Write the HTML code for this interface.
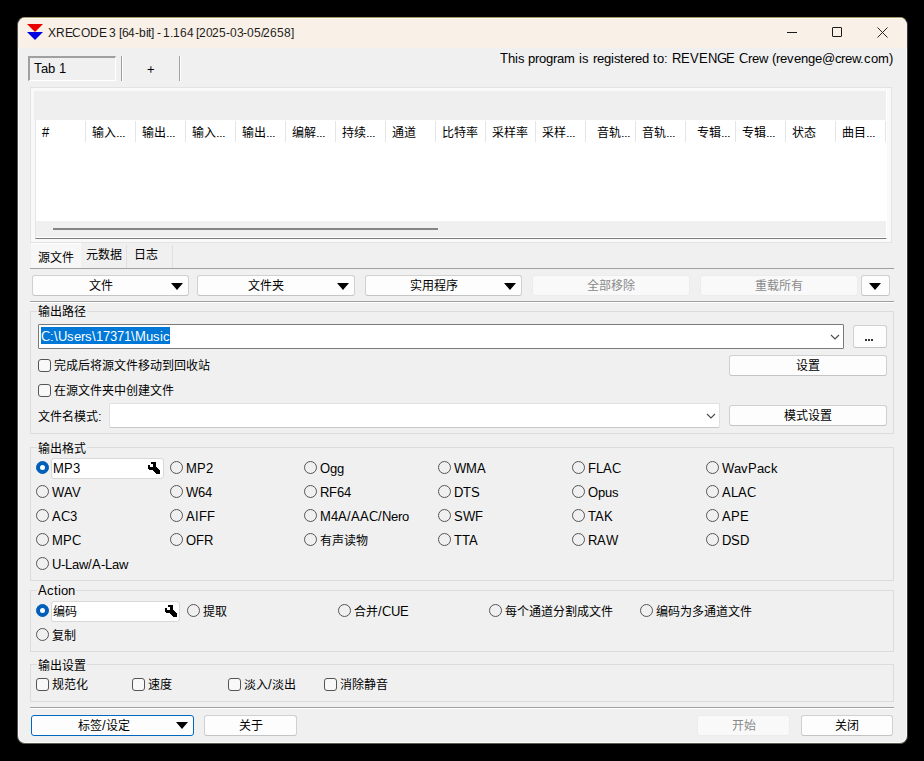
<!DOCTYPE html>
<html lang="zh-CN">
<head>
<meta charset="utf-8">
<style>
@font-face{font-family:"Liberation Sans";src:local("Liberation Sans");unicode-range:U+0000-02FF,U+2000-206F;size-adjust:108%}
*{box-sizing:border-box;margin:0;padding:0}
html,body{width:924px;height:761px;overflow:hidden;background:#000}
body{position:relative;font-family:"Liberation Sans",sans-serif;font-size:12px;color:#000}
.a{position:absolute}
.t{position:absolute;white-space:nowrap;line-height:16px;height:16px}
#win{position:absolute;left:17px;top:17px;width:891px;height:727px;border-radius:8px;background:#f0f0f0;border:1px solid #555;border-top-color:#a89a68;border-bottom-color:#5e5c50;border-right-color:#3a3a3a;overflow:hidden;box-shadow:inset 0 0 0 1px rgba(255,255,255,.75)}
#title{position:absolute;left:0;top:0;width:100%;height:30px;background:#f9f1e7;border-top:1px solid #fffaf2}
.vsep{position:absolute;width:2px;border-left:1px solid #a0a0a0;border-right:1px solid #fff}
.hsep{position:absolute;height:2px;border-top:1px solid #a0a0a0;border-bottom:1px solid #fff}
.btn{position:absolute;background:#fdfdfd;border:1px solid #d0d0d0;border-bottom-color:#c4c4c4;border-radius:3px;text-align:center;line-height:19px}
.btn.dis{background:#f9f9f9;border-color:#ececec;color:#8a8a8a;line-height:20px}
.tri{position:absolute;width:0;height:0;border-left:6px solid transparent;border-right:6px solid transparent;border-top:7px solid #000}
.grp{position:absolute;border:1px solid #dcdcdc;border-radius:0}
.glab{position:absolute;background:#f0f0f0;padding:0 1px;line-height:14px}
.cb{position:absolute;width:13px;height:13px;border:1px solid #555;border-radius:3px;background:#f8f8f8}
.rb{position:absolute;width:13px;height:13px;border:1px solid #555;border-radius:50%;background:transparent}
.rb.on{background:#005fb8;border-color:#005fb8}
.rb.on::after{content:"";position:absolute;left:3px;top:3px;width:5px;height:5px;border-radius:50%;background:#fff}
.col{position:absolute;top:121px;height:21px;width:1px;background:#e5e5e5}
.el{letter-spacing:-0.9px}
.hd{position:absolute;top:125px;line-height:16px;white-space:nowrap}
</style>
</head>
<body>
<div id="win">
  <div id="title"></div>
</div>

<!-- title bar icon -->
<svg class="a" style="left:27px;top:24px" width="16" height="16" viewBox="0 0 16 16">
  <polygon points="0,0 16,0 8,8" fill="#e80000"/>
  <polygon points="0,8 16,8 8,16" fill="#0000e0"/>
</svg>
<div class="t" style="left:48px;top:25px;color:#1a1a1a;font-size:11.112px;letter-spacing:-0.22px">XRECODE 3 [64-bit] - 1.164 [2025-03-05/2658]</div>
<!-- window controls -->
<div class="a" style="left:787px;top:32px;width:10px;height:1px;background:#1a1a1a"></div>
<div class="a" style="left:832px;top:27px;width:10px;height:10px;border:1px solid #1a1a1a;border-radius:1px"></div>
<svg class="a" style="left:877px;top:27px" width="11" height="11" viewBox="0 0 11 11"><path d="M0.5,0.5 L10.5,10.5 M10.5,0.5 L0.5,10.5" stroke="#1a1a1a" stroke-width="0.95"/></svg>

<div class="t" style="right:31px;top:51px;color:#000;letter-spacing:-0.06px">This program is registered to: REVENGE Crew (revenge@crew.com)</div>

<!-- tab strip -->
<div class="a" style="left:28px;top:56px;width:88px;height:25px;border-top:2px solid #a0a0a0;border-left:2px solid #a0a0a0;border-bottom:1px solid #fff;border-right:1px solid #fff"></div>
<div class="t" style="left:34px;top:61px">Tab 1</div>
<div class="vsep" style="left:121px;top:56px;height:25px"></div>
<div class="t" style="left:147px;top:62px">+</div>
<div class="vsep" style="left:179px;top:56px;height:25px"></div>

<!-- list -->
<div class="a" style="left:30px;top:87px;width:862px;height:156px;border:1px solid #e3e3e3;background:#f9f9f9"></div>
<div class="a" style="left:35px;top:91px;width:852px;height:148px;background:#fff;border-left:1px solid #e6e6e6;border-bottom:1px solid #7a7a7a;border-right:1px solid #fff"></div>
<div class="a" style="left:34px;top:91px;width:852px;height:29px;background:#efefef"></div>
<div class="a" style="left:36px;top:221px;width:850px;height:16px;background:#f0f0f0"></div>
<div class="a" style="left:53px;top:228px;width:385px;height:2px;background:#858585"></div>
<div class="col" style="left:85px"></div>
<div class="col" style="left:135px"></div>
<div class="col" style="left:185px"></div>
<div class="col" style="left:235px"></div>
<div class="col" style="left:285px"></div>
<div class="col" style="left:335px"></div>
<div class="col" style="left:385px"></div>
<div class="col" style="left:435px"></div>
<div class="col" style="left:485px"></div>
<div class="col" style="left:535px"></div>
<div class="col" style="left:585px"></div>
<div class="col" style="left:635px"></div>
<div class="col" style="left:685px"></div>
<div class="col" style="left:735px"></div>
<div class="col" style="left:785px"></div>
<div class="col" style="left:835px"></div>
<div class="col" style="left:885px"></div>
<div class="hd" style="left:42px">#</div>
<div class="hd" style="left:92px">输入<span class="el">...</span></div>
<div class="hd" style="left:142px">输出<span class="el">...</span></div>
<div class="hd" style="left:192px">输入<span class="el">...</span></div>
<div class="hd" style="left:242px">输出<span class="el">...</span></div>
<div class="hd" style="left:292px">编解<span class="el">...</span></div>
<div class="hd" style="left:342px">持续<span class="el">...</span></div>
<div class="hd" style="left:392px">通道</div>
<div class="hd" style="left:442px">比特率</div>
<div class="hd" style="left:492px">采样率</div>
<div class="hd" style="left:542px">采样<span class="el">...</span></div>
<div class="hd" style="left:597px">音轨<span class="el">...</span></div>
<div class="hd" style="left:642px">音轨<span class="el">...</span></div>
<div class="hd" style="left:697px">专辑<span class="el">...</span></div>
<div class="hd" style="left:742px">专辑<span class="el">...</span></div>
<div class="hd" style="left:792px">状态</div>
<div class="hd" style="left:842px">曲目<span class="el">...</span></div>

<!-- lower tabs -->
<div class="a" style="left:31px;top:243px;width:50px;height:26px;background:#f7f7f7;border-top:1px solid #fff"></div>
<div class="a" style="left:81px;top:245px;width:46px;height:23px;background:#f0f0f0;border-right:1px solid #e0e0e0"></div>
<div class="a" style="left:128px;top:245px;width:45px;height:23px;background:#f0f0f0;border-right:1px solid #e0e0e0"></div>
<div class="t" style="left:38px;top:250px">源文件</div>
<div class="t" style="left:86px;top:247px">元数据</div>
<div class="t" style="left:134px;top:247px">日志</div>
<div class="a" style="left:30px;top:268px;width:864px;height:1px;background:#a0a0a0"></div>

<!-- button row -->
<div class="btn" style="left:32px;top:275px;width:157px;height:21px;padding-right:20px">文件</div>
<div class="tri" style="left:171px;top:283px"></div>
<div class="btn" style="left:197px;top:275px;width:158px;height:21px;padding-right:20px">文件夹</div>
<div class="tri" style="left:337px;top:283px"></div>
<div class="btn" style="left:365px;top:275px;width:157px;height:21px;padding-right:20px">实用程序</div>
<div class="tri" style="left:504px;top:283px"></div>
<div class="btn dis" style="left:532px;top:275px;width:158px;height:21px">全部移除</div>
<div class="btn dis" style="left:700px;top:275px;width:158px;height:21px">重载所有</div>
<div class="btn" style="left:861px;top:275px;width:29px;height:21px"></div>
<div class="tri" style="left:869px;top:283px"></div>

<div class="hsep" style="left:30px;top:301px;width:864px"></div>

<!-- output path group -->
<div class="grp" style="left:30px;top:311px;width:864px;height:123px"></div>
<div class="glab" style="left:37px;top:305px">输出路径</div>
<div class="a" style="left:38px;top:324px;width:806px;height:25px;background:#fff;border:1px solid #7a7a7a;border-radius:1px"></div>
<div class="a" style="left:41px;top:327px;width:129px;height:17px;background:#0078d7"></div>
<div class="t" style="left:41px;top:328px;color:#fff;line-height:17px">C:\Users\17371\Music</div>
<svg class="a" style="left:830px;top:334px" width="10" height="6" viewBox="0 0 10 6"><path d="M1,1 L5,5 L9,1" fill="none" stroke="#4a4a4a" stroke-width="1.1"/></svg>
<div class="btn" style="left:853px;top:325px;width:34px;height:23px"></div><div class="a" style="left:865px;top:339px;width:2px;height:2px;background:#333"></div><div class="a" style="left:868px;top:339px;width:2px;height:2px;background:#333"></div><div class="a" style="left:871px;top:339px;width:2px;height:2px;background:#333"></div>
<div class="cb" style="left:38px;top:359px"></div>
<div class="t" style="left:54px;top:358px">完成后将源文件移动到回收站</div>
<div class="btn" style="left:729px;top:355px;width:158px;height:21px">设置</div>
<div class="cb" style="left:38px;top:384px"></div>
<div class="t" style="left:54px;top:383px">在源文件夹中创建文件</div>
<div class="t" style="left:38px;top:409px">文件名模式:</div>
<div class="a" style="left:109px;top:403px;width:611px;height:25px;background:#fff;border:1px solid #e0e0e0;border-bottom-color:#c8c8c8;border-radius:2px"></div>
<svg class="a" style="left:706px;top:413px" width="10" height="6" viewBox="0 0 10 6"><path d="M1,1 L5,5 L9,1" fill="none" stroke="#4a4a4a" stroke-width="1.1"/></svg>
<div class="btn" style="left:729px;top:405px;width:158px;height:21px">模式设置</div>

<!-- output format group -->
<div class="grp" style="left:30px;top:447px;width:864px;height:134px"></div>
<div class="glab" style="left:37px;top:442px">输出格式</div>
<div class="rb on" style="left:36px;top:461px"></div>
<div class="a" style="left:51px;top:458px;width:113px;height:21px;background:#fff;border:1px solid #d8d8d8;border-radius:3px"></div>
<div class="t" style="left:53px;top:461px">MP3</div>
<svg class="a" style="left:140px;top:455px" width="30" height="27" viewBox="0 0 30 27" shape-rendering="crispEdges"><path d="M11,7 L15,7 L16,8 L16,12 L20,16 L20,18 L19,19 L16,19 L12,15 L9,15 L8,14 L8,10 L10,10 L10,12 L13,12 L13,9 L11,9 Z" fill="#000"/></svg>
<div class="rb" style="left:170px;top:461px"></div><div class="t" style="left:186px;top:461px">MP2</div>
<div class="rb" style="left:304px;top:461px"></div><div class="t" style="left:320px;top:461px">Ogg</div>
<div class="rb" style="left:438px;top:461px"></div><div class="t" style="left:454px;top:461px">WMA</div>
<div class="rb" style="left:572px;top:461px"></div><div class="t" style="left:588px;top:461px">FLAC</div>
<div class="rb" style="left:706px;top:461px"></div><div class="t" style="left:722px;top:461px">WavPack</div>
<div class="rb" style="left:36px;top:485px"></div><div class="t" style="left:52px;top:485px">WAV</div>
<div class="rb" style="left:170px;top:485px"></div><div class="t" style="left:186px;top:485px">W64</div>
<div class="rb" style="left:304px;top:485px"></div><div class="t" style="left:320px;top:485px">RF64</div>
<div class="rb" style="left:438px;top:485px"></div><div class="t" style="left:454px;top:485px">DTS</div>
<div class="rb" style="left:572px;top:485px"></div><div class="t" style="left:588px;top:485px">Opus</div>
<div class="rb" style="left:706px;top:485px"></div><div class="t" style="left:722px;top:485px">ALAC</div>
<div class="rb" style="left:36px;top:509px"></div><div class="t" style="left:52px;top:509px">AC3</div>
<div class="rb" style="left:170px;top:509px"></div><div class="t" style="left:186px;top:509px">AIFF</div>
<div class="rb" style="left:304px;top:509px"></div><div class="t" style="left:320px;top:509px">M4A/AAC/Nero</div>
<div class="rb" style="left:438px;top:509px"></div><div class="t" style="left:454px;top:509px">SWF</div>
<div class="rb" style="left:572px;top:509px"></div><div class="t" style="left:588px;top:509px">TAK</div>
<div class="rb" style="left:706px;top:509px"></div><div class="t" style="left:722px;top:509px">APE</div>
<div class="rb" style="left:36px;top:533px"></div><div class="t" style="left:52px;top:533px">MPC</div>
<div class="rb" style="left:170px;top:533px"></div><div class="t" style="left:186px;top:533px">OFR</div>
<div class="rb" style="left:304px;top:533px"></div><div class="t" style="left:320px;top:533px">有声读物</div>
<div class="rb" style="left:438px;top:533px"></div><div class="t" style="left:454px;top:533px">TTA</div>
<div class="rb" style="left:572px;top:533px"></div><div class="t" style="left:588px;top:533px">RAW</div>
<div class="rb" style="left:706px;top:533px"></div><div class="t" style="left:722px;top:533px">DSD</div>
<div class="rb" style="left:36px;top:557px"></div><div class="t" style="left:52px;top:557px">U-Law/A-Law</div>

<!-- action group -->
<div class="grp" style="left:30px;top:590px;width:864px;height:62px"></div>
<div class="glab" style="left:37px;top:584px">Action</div>
<div class="rb on" style="left:36px;top:604px"></div>
<div class="a" style="left:51px;top:601px;width:129px;height:21px;background:#fff;border:1px solid #d8d8d8;border-radius:3px"></div>
<div class="t" style="left:53px;top:604px">编码</div>
<svg class="a" style="left:157px;top:598px" width="30" height="27" viewBox="0 0 30 27" shape-rendering="crispEdges"><path d="M11,7 L15,7 L16,8 L16,12 L20,16 L20,18 L19,19 L16,19 L12,15 L9,15 L8,14 L8,10 L10,10 L10,12 L13,12 L13,9 L11,9 Z" fill="#000"/></svg>
<div class="rb" style="left:187px;top:604px"></div><div class="t" style="left:203px;top:604px">提取</div>
<div class="rb" style="left:338px;top:604px"></div><div class="t" style="left:354px;top:604px">合并/CUE</div>
<div class="rb" style="left:489px;top:604px"></div><div class="t" style="left:505px;top:604px">每个通道分割成文件</div>
<div class="rb" style="left:640px;top:604px"></div><div class="t" style="left:656px;top:604px">编码为多通道文件</div>
<div class="rb" style="left:36px;top:628px"></div><div class="t" style="left:52px;top:628px">复制</div>

<!-- output settings -->
<div class="grp" style="left:30px;top:664px;width:864px;height:38px"></div>
<div class="glab" style="left:37px;top:659px">输出设置</div>
<div class="cb" style="left:36px;top:678px"></div><div class="t" style="left:52px;top:677px">规范化</div>
<div class="cb" style="left:132px;top:678px"></div><div class="t" style="left:148px;top:677px">速度</div>
<div class="cb" style="left:228px;top:678px"></div><div class="t" style="left:244px;top:677px">淡入/淡出</div>
<div class="cb" style="left:324px;top:678px"></div><div class="t" style="left:340px;top:677px">消除静音</div>

<div class="hsep" style="left:30px;top:707px;width:864px"></div>

<!-- bottom buttons -->
<div class="btn" style="left:31px;top:715px;width:163px;height:21px;border:1px solid #0067c0;padding-right:17px;line-height:20px">标签/设定</div>
<div class="tri" style="left:176px;top:722px"></div>
<div class="btn" style="left:204px;top:715px;width:93px;height:21px">关于</div>
<div class="btn dis" style="left:697px;top:715px;width:93px;height:21px">开始</div>
<div class="btn" style="left:801px;top:715px;width:92px;height:21px">关闭</div>

</body>
</html>
